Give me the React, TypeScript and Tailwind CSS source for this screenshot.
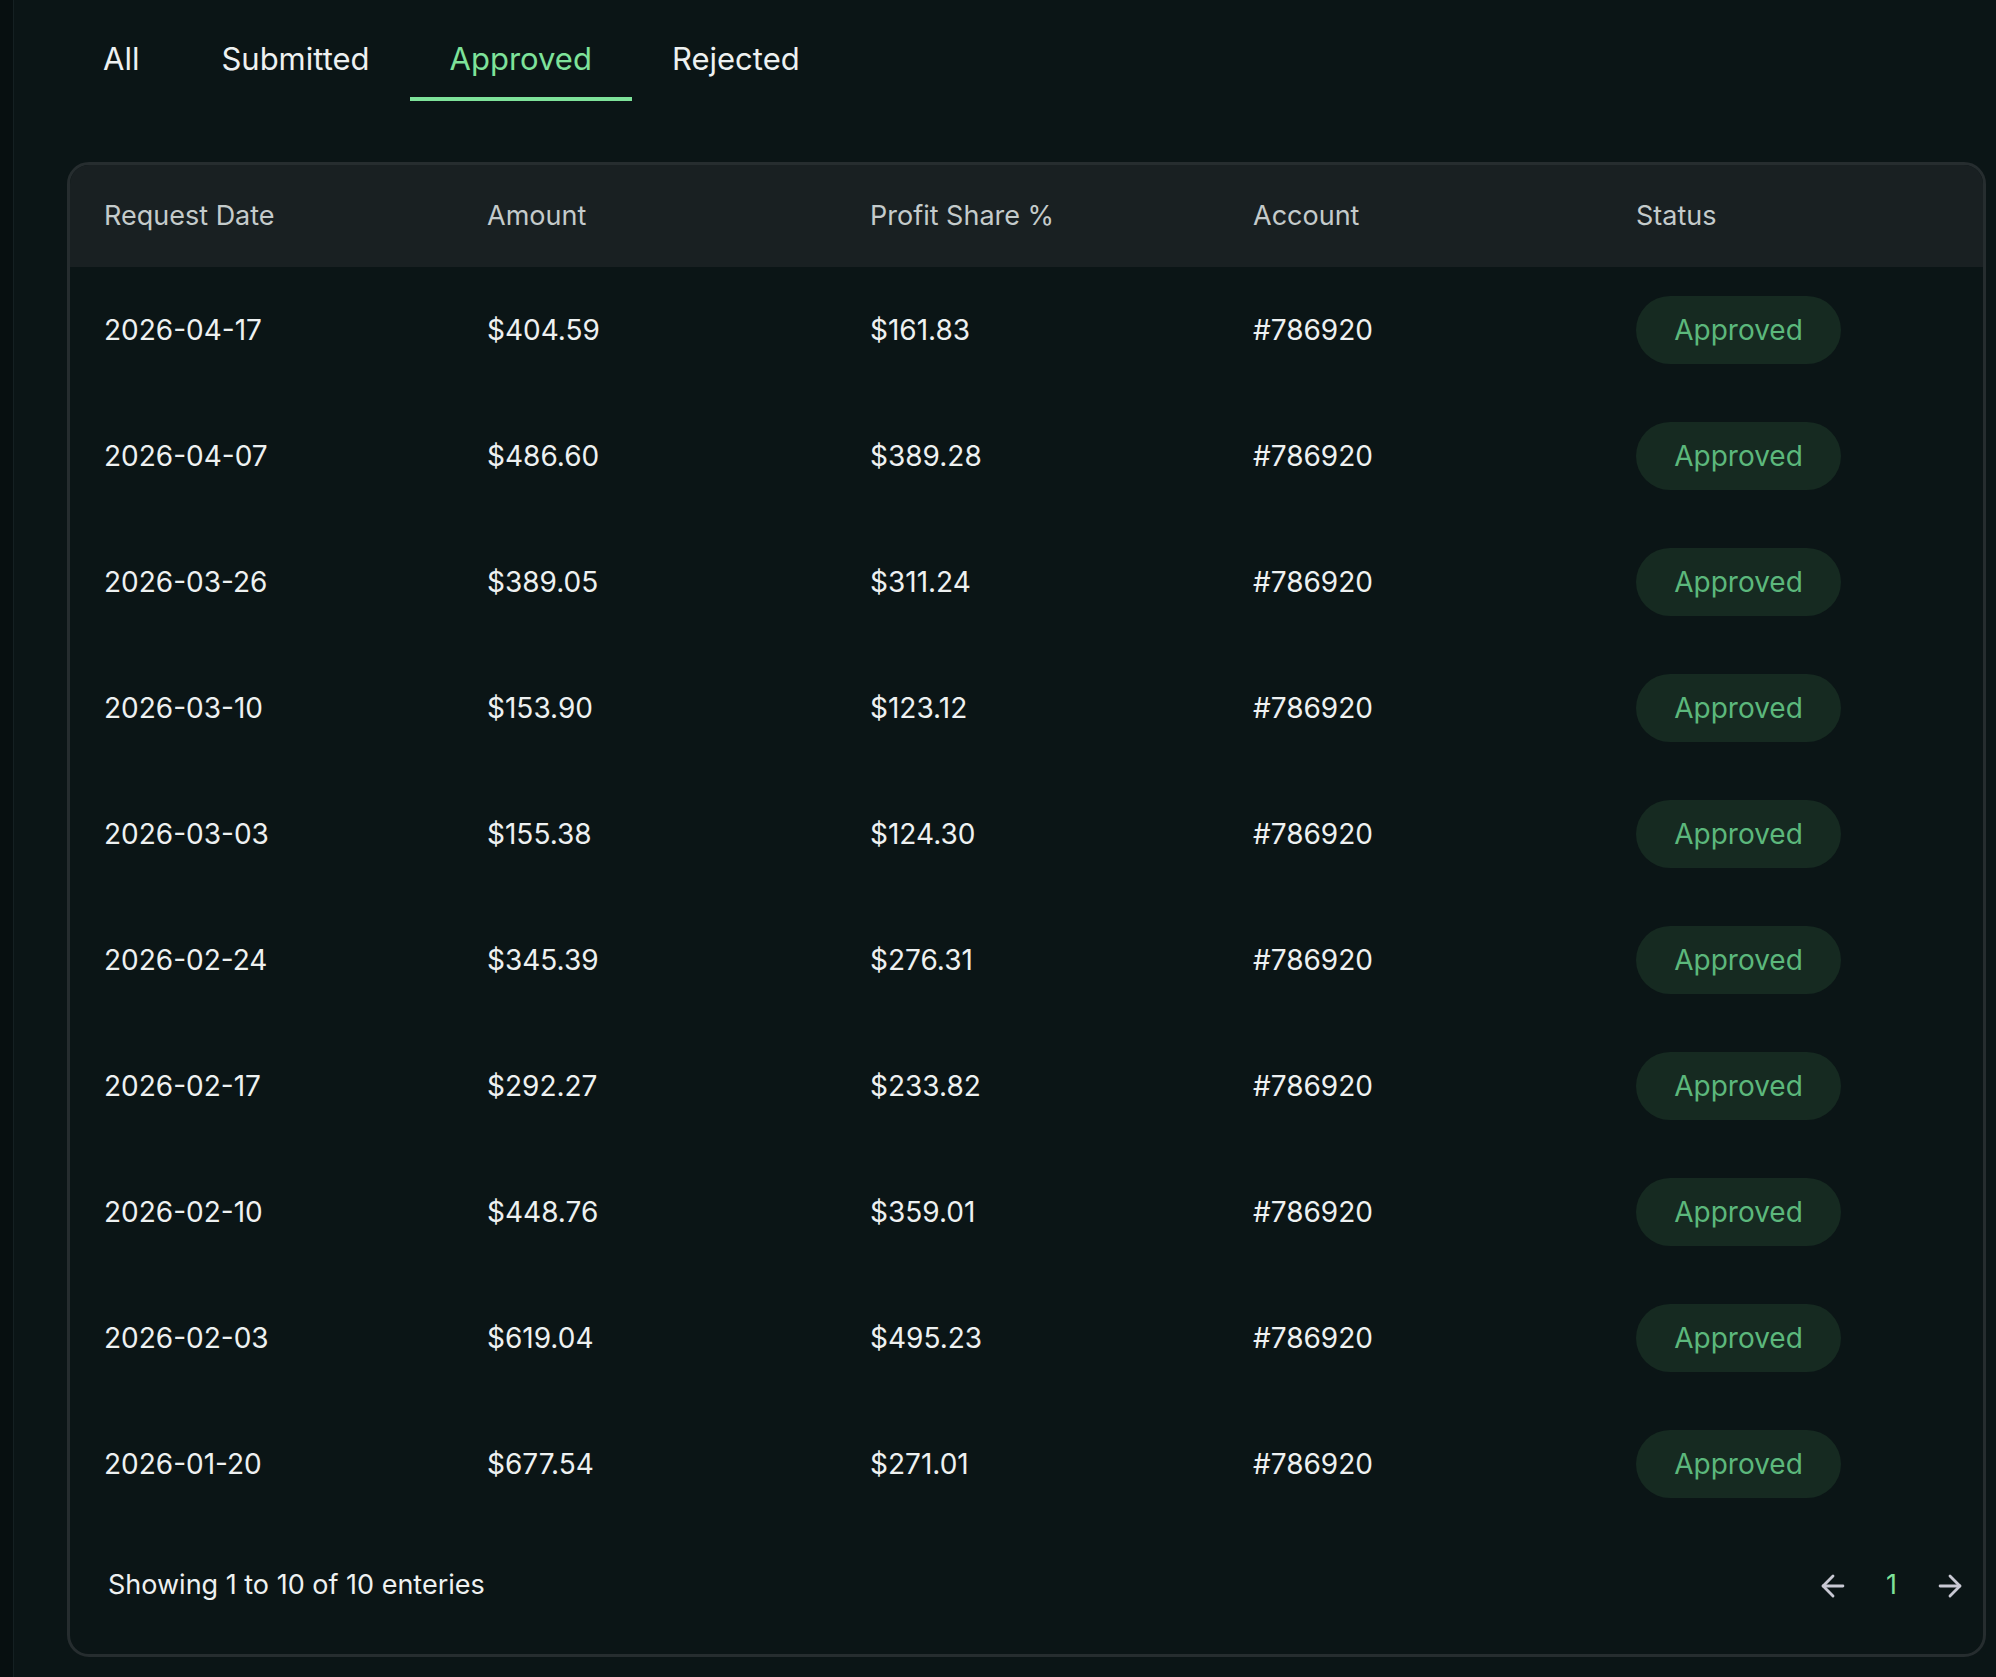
import React from 'react';
import { ArrowLeft, ArrowRight } from 'lucide-react';

const rows = [
    ['2026-04-17', '$404.59', '$161.83'],
    ['2026-04-07', '$486.60', '$389.28'],
    ['2026-03-26', '$389.05', '$311.24'],
    ['2026-03-10', '$153.90', '$123.12'],
    ['2026-03-03', '$155.38', '$124.30'],
    ['2026-02-24', '$345.39', '$276.31'],
    ['2026-02-17', '$292.27', '$233.82'],
    ['2026-02-10', '$448.76', '$359.01'],
    ['2026-02-03', '$619.04', '$495.23'],
    ['2026-01-20', '$677.54', '$271.01'],
];

const tabs = ['All', 'Submitted', 'Approved', 'Rejected'];

export default function App() {
    return (
        <div className="flex min-h-[1677px] w-[1996px] bg-[#0b1516] text-[#eef1f1]" style={{ fontFamily: 'Inter, "Noto Sans", sans-serif' }}>
            <div className="w-[14px] bg-[#070f10] border-r border-[#152022]" />
            <div className="flex-1 pl-[53px] pr-[10px]">
                {/* Tabs */}
                <div className="flex h-[101px] pl-[18px] items-end">
                    {tabs.map((t) => (
                        <div
                            key={t}
                            className={`h-full flex items-center px-[40px] first:pl-[18px] first:pr-[42px] text-[31px] pt-[22px] border-b-[4px] ${t === 'Approved' ? 'text-[#7ee29a] border-[#7ee29a] pt-[14px]' : 'border-transparent'}`}
                        >
                            {t}
                        </div>
                    ))}
                </div>

                {/* Table card */}
                <div className="mt-[61px] border-[3px] border-[#262d2f] rounded-[22px] overflow-hidden">
                    <div className="grid grid-cols-[383px_383px_383px_383px_1fr] h-[102px] items-center bg-[#192022] px-[34px] text-[27px] text-[#c4cbcb]">
                        <div>Request Date</div>
                        <div>Amount</div>
                        <div>Profit Share %</div>
                        <div>Account</div>
                        <div>Status</div>
                    </div>
                    {rows.map((r) => (
                        <div key={r[0]} className="grid grid-cols-[383px_383px_383px_383px_1fr] h-[126px] items-center px-[34px] text-[28px]">
                            <div>{r[0]}</div>
                            <div>{r[1]}</div>
                            <div>{r[2]}</div>
                            <div>#786920</div>
                            <div>
                                <span className="inline-flex items-center justify-center w-[205px] h-[68px] rounded-full bg-[#162a21] text-[#5cb87c] text-[28px]">
                                    Approved
                                </span>
                            </div>
                        </div>
                    ))}
                    <div className="flex items-center justify-between h-[127px] pl-[38px] pr-[16px] pb-[10px]">
                        <div className="text-[27px]">Showing 1 to 10 of 10 enteries</div>
                        <div className="flex items-center gap-[36px] text-[#c9c9d4]">
                            <ArrowLeft className="w-[34px] h-[34px]" strokeWidth={2} />
                            <span className="text-[27px] text-[#7ee29a]">1</span>
                            <ArrowRight className="w-[34px] h-[34px]" strokeWidth={2} />
                        </div>
                    </div>
                </div>
            </div>
        </div>
    );
}
